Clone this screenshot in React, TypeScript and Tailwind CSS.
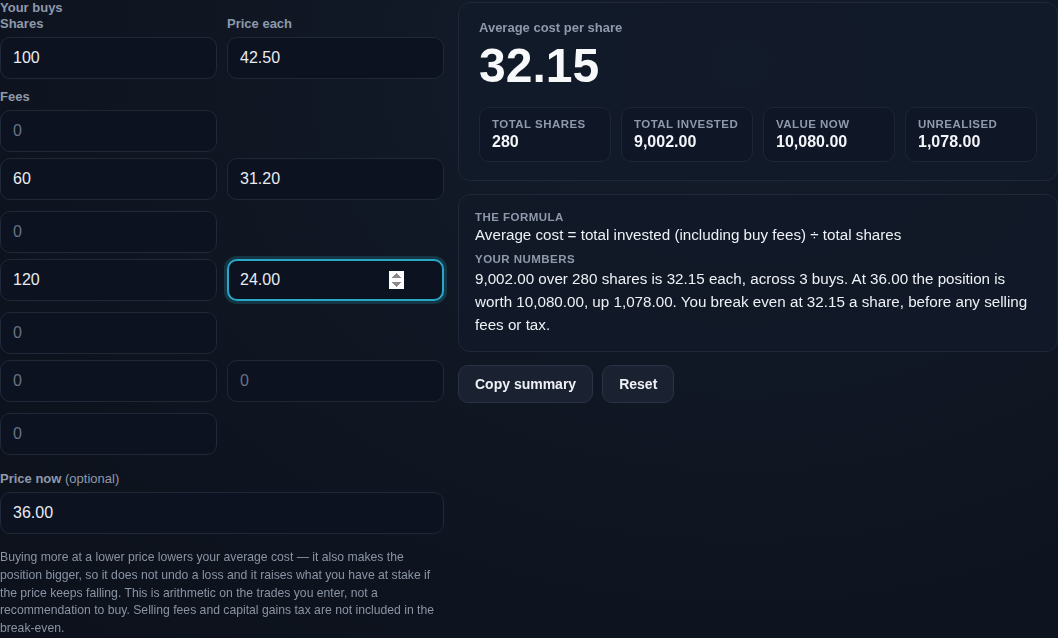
import * as React from "react";

type Buy = { shares: string; price: string; fees: string };

const initialBuys: Buy[] = [
  { shares: "100", price: "42.50", fees: "" },
  { shares: "60", price: "31.20", fees: "" },
  { shares: "120", price: "24.00", fees: "" },
  { shares: "", price: "", fees: "" },
];

const inputClass =
  "h-[42px] w-full rounded-[10px] border border-[#1f2938] bg-[#0c1220] pl-3 pr-[38px] text-[16px] text-[#e8ecf2] placeholder:text-[#687384] outline-none focus:border-2 focus:border-[#27a9c6] focus:pl-[11px] focus:shadow-[0_0_0_3px_rgba(39,169,198,0.22)]";

function Field(props: {
  value: string;
  onChange: (v: string) => void;
  autoFocus?: boolean;
}) {
  return (
    <input
      type="number"
      className={inputClass}
      placeholder="0"
      value={props.value}
      autoFocus={props.autoFocus}
      onChange={(e) => props.onChange(e.target.value)}
    />
  );
}

function Stat(props: { label: string; value: string }) {
  return (
    <div className="flex h-[55px] flex-col rounded-[10px] border border-[#1d2636] bg-[#0f1626] px-3 pt-[9px]">
      <div className="whitespace-nowrap text-[11.5px] font-bold uppercase leading-[14px] tracking-[0.04em] text-[#8e99ab]">
        {props.label}
      </div>
      <div className="mt-[1px] text-[16px] font-bold leading-[19px] text-[#f3f5f8]">
        {props.value}
      </div>
    </div>
  );
}

export default function App() {
  const [buys, setBuys] = React.useState<Buy[]>(initialBuys);
  const [priceNow, setPriceNow] = React.useState("36.00");

  const update = (i: number, key: keyof Buy, v: string) =>
    setBuys((b) => b.map((row, j) => (j === i ? { ...row, [key]: v } : row)));

  return (
    <div
      className="min-h-[638px] w-[1058px] bg-[#0f1521] bg-[radial-gradient(ellipse_at_70%_10%,#151e2d_0%,#0f1521_55%,#0c111b_100%)] text-[#e8ecf2]"
      style={{ fontFamily: '"Liberation Sans", Arial, sans-serif' }}
    >
      <div className="grid grid-cols-[444px_600px] gap-x-[14px]">
        {/* inputs column */}
        <div className="flex flex-col">
          <div className="text-[13px] font-bold leading-[16px] text-[#8e99ab]">Your buys</div>
          <div className="flex flex-col gap-[6px]">
            {buys.map((b, i) => (
              <div key={i} className="flex flex-col">
                <div className="grid grid-cols-2 gap-x-[10px]">
                  <div className="flex flex-col">
                    {i === 0 && (
                      <label className="mb-[5px] text-[13px] font-bold leading-[16px] text-[#8e99ab]">
                        Shares
                      </label>
                    )}
                    <Field value={b.shares} onChange={(v) => update(i, "shares", v)} />
                  </div>
                  <div className="flex flex-col">
                    {i === 0 && (
                      <label className="mb-[5px] text-[13px] font-bold leading-[16px] text-[#8e99ab]">
                        Price each
                      </label>
                    )}
                    <Field
                      value={b.price}
                      autoFocus={i === 2}
                      onChange={(v) => update(i, "price", v)}
                    />
                  </div>
                </div>
                <div className={`grid grid-cols-2 gap-x-[10px] ${i === 0 ? "mt-[10px]" : "mt-[11px]"}`}>
                  <div className="flex flex-col">
                    {i === 0 && (
                      <label className="mb-[5px] text-[13px] font-bold leading-[16px] text-[#8e99ab]">
                        Fees
                      </label>
                    )}
                    <Field value={b.fees} onChange={(v) => update(i, "fees", v)} />
                  </div>
                </div>
              </div>
            ))}
          </div>

          <label className="mt-[16px] mb-[5px] text-[13px] leading-[16px] text-[#8e99ab]">
            <span className="font-bold">Price now</span> (optional)
          </label>
          <Field value={priceNow} onChange={setPriceNow} />

          <p className="mt-[15px] text-[12.2px] leading-[17.8px] text-[#8a94a4]">
            Buying more at a lower price lowers your average cost — it also makes the position
            bigger, so it does not undo a loss and it raises what you have at stake if the price
            keeps falling. This is arithmetic on the trades you enter, not a recommendation to buy.
            Selling fees and capital gains tax are not included in the break-even.
          </p>
        </div>

        {/* results column */}
        <div className="flex flex-col pt-[2px]">
          <div className="rounded-[12px] border border-[#1f2838] bg-[#121a29]/80 px-5 pt-[17px] pb-[18px]">
            <div className="text-[13px] font-bold leading-[16px] text-[#8e99ab]">
              Average cost per share
            </div>
            <div className="mt-[3px] text-[48px] font-bold leading-[54px] text-[#f7f8fa]">32.15</div>
            <div className="mt-[14px] grid grid-cols-4 gap-[10px]">
              <Stat label="Total shares" value="280" />
              <Stat label="Total invested" value="9,002.00" />
              <Stat label="Value now" value="10,080.00" />
              <Stat label="Unrealised" value="1,078.00" />
            </div>
          </div>

          <div className="mt-[13px] rounded-[12px] border border-[#1f2838] bg-[#111928]/80 px-4 pt-[15px] pb-[15px]">
            <div className="text-[11.5px] font-bold uppercase leading-[14px] tracking-[0.04em] text-[#8e99ab]">
              The formula
            </div>
            <div className="mt-[1px] text-[15.2px] leading-[20px] text-[#eef1f5]">
              Average cost = total invested (including buy fees) ÷ total shares
            </div>
            <div className="mt-[7px] text-[11.5px] font-bold uppercase leading-[14px] tracking-[0.04em] text-[#8e99ab]">
              Your numbers
            </div>
            <p className="mt-[1px] text-[15.2px] leading-[23px] text-[#eef1f5]">
              9,002.00 over 280 shares is 32.15 each, across 3 buys. At 36.00 the position is
              worth 10,080.00, up 1,078.00. You break even at 32.15 a share, before any selling
              fees or tax.
            </p>
          </div>

          <div className="mt-[13px] flex gap-[9px]">
            <button className="h-[38px] rounded-[10px] border border-[#2a3446] bg-[#1a2232] px-4 text-[14px] font-bold text-[#eef1f5]">
              Copy summary
            </button>
            <button className="h-[38px] rounded-[10px] border border-[#2a3446] bg-[#1a2232] px-4 text-[14px] font-bold text-[#eef1f5]">
              Reset
            </button>
          </div>
        </div>
      </div>
    </div>
  );
}
